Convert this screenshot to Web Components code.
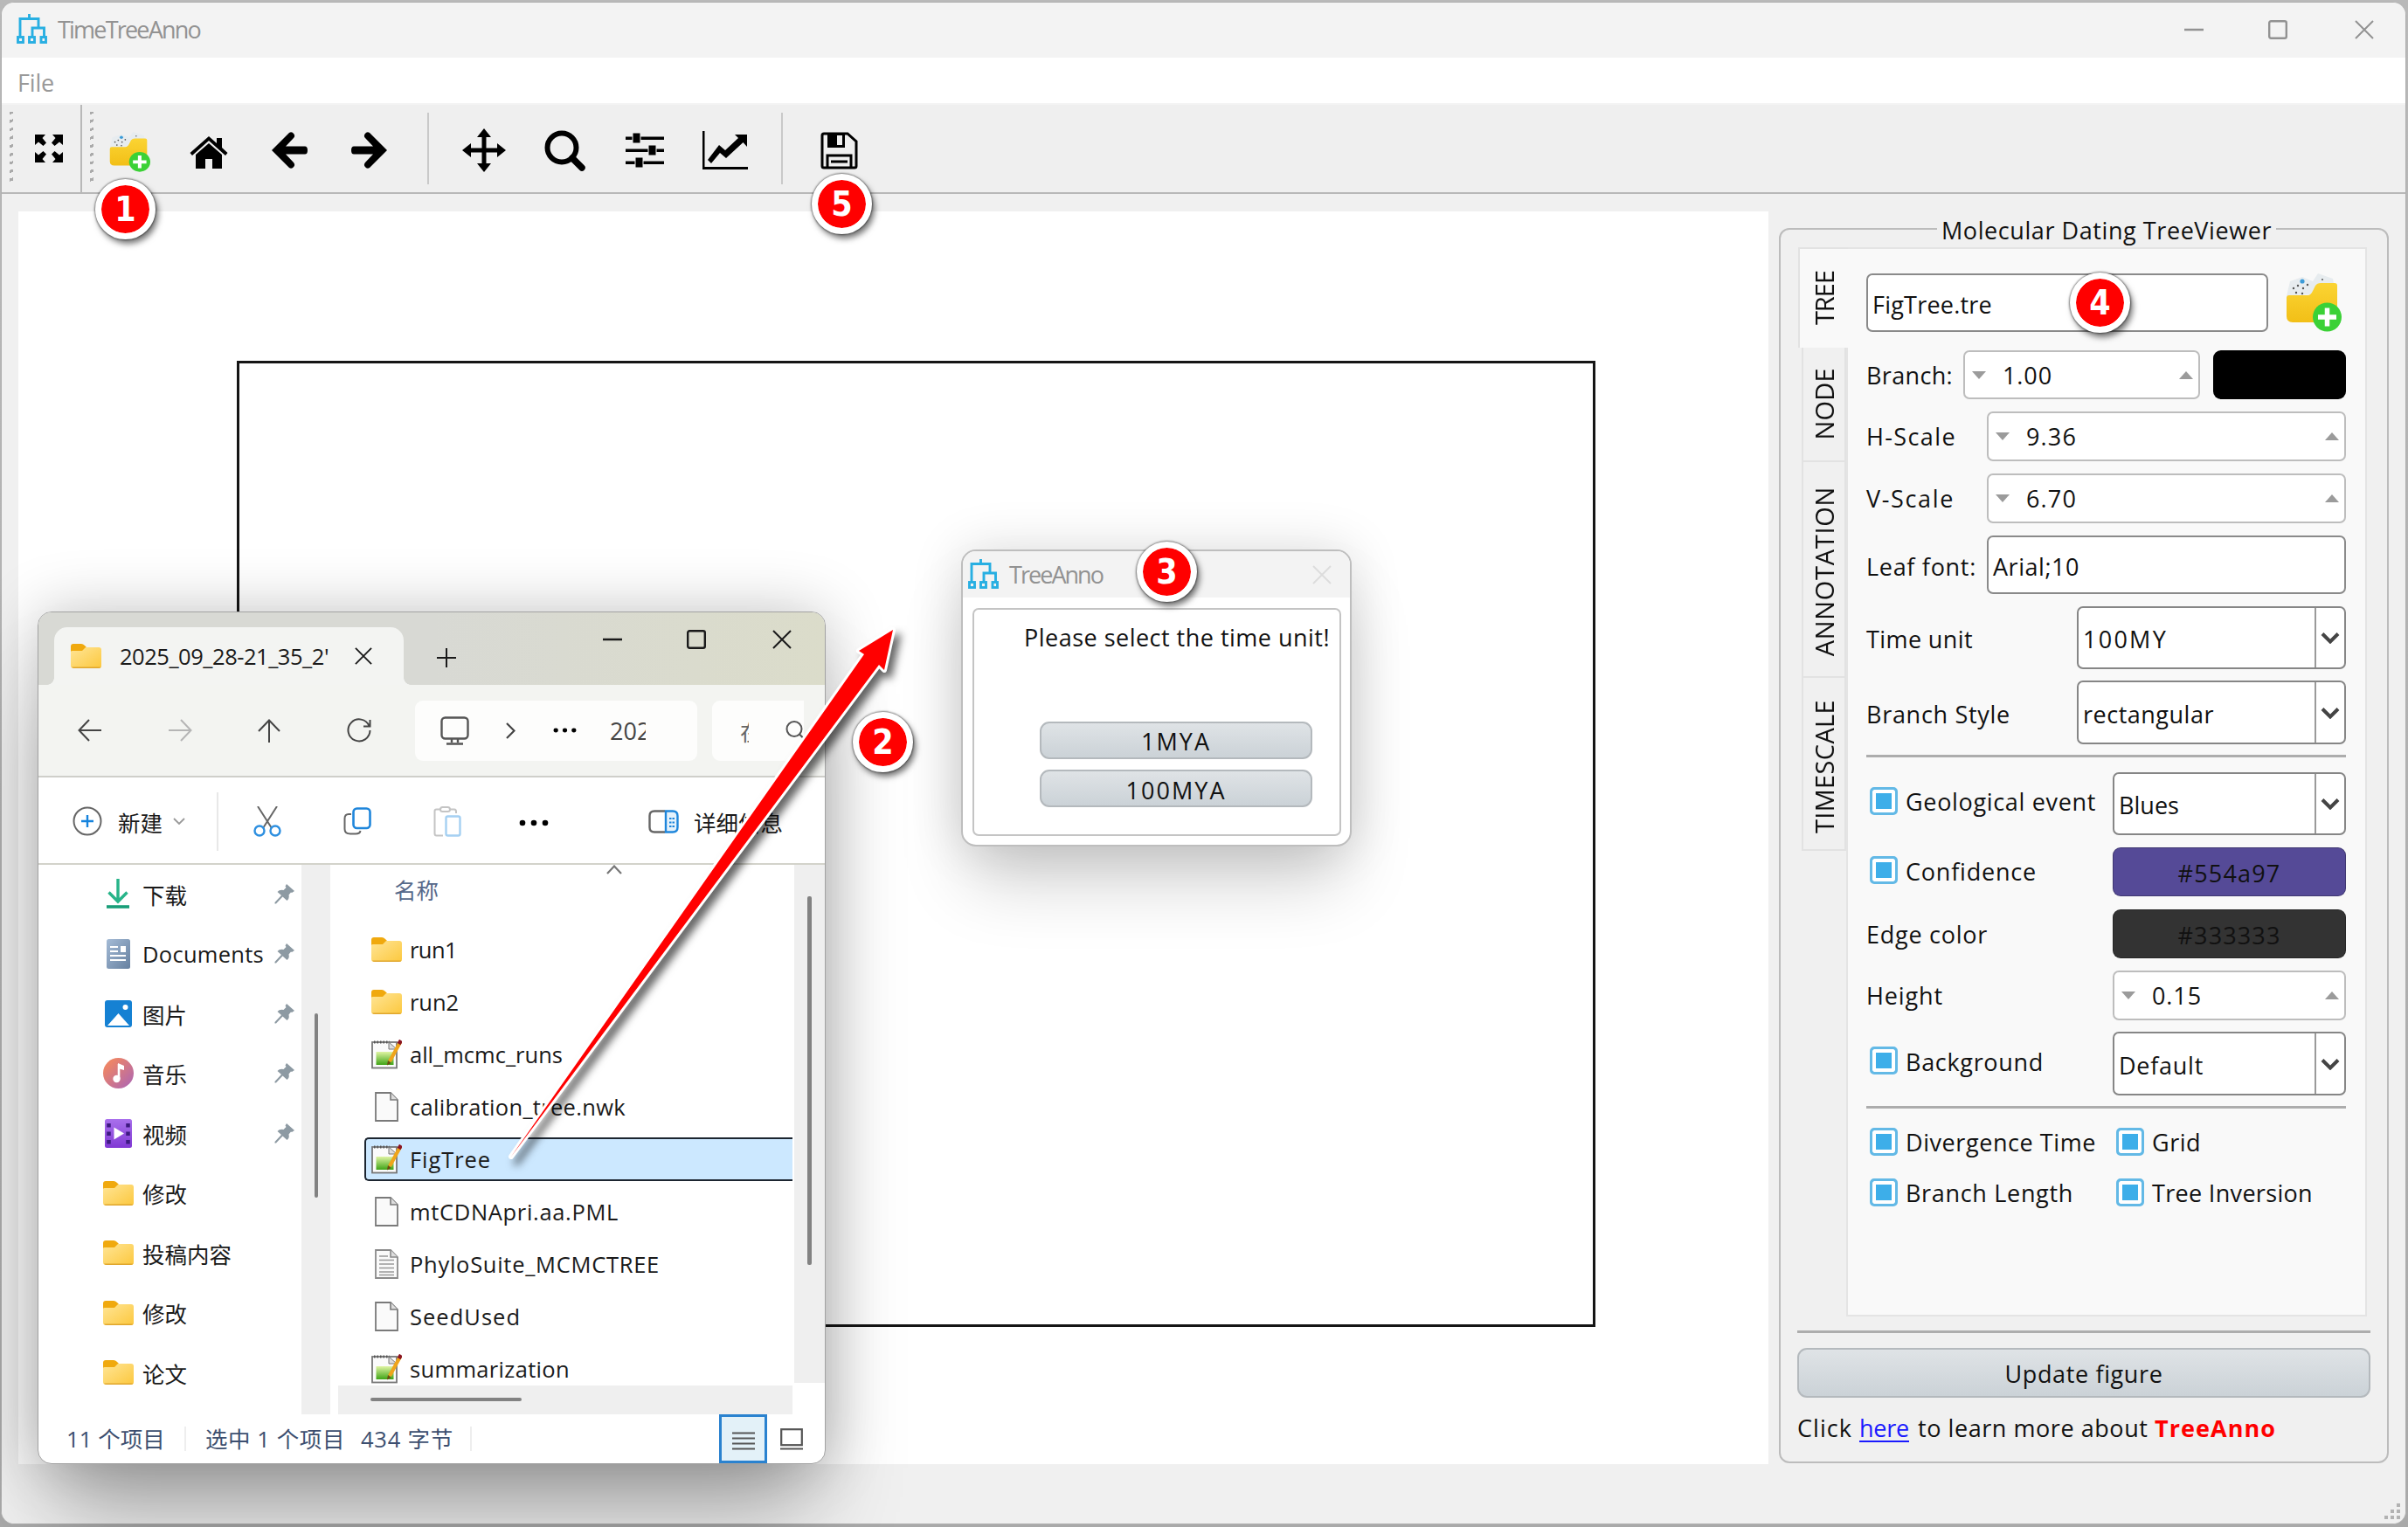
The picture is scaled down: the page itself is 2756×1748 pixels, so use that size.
<!DOCTYPE html>
<html lang="zh-CN">
<head>
<meta charset="utf-8">
<title>TimeTreeAnno</title>
<style>
  html, body {
    margin: 0;
    width: 2756px;
    height: 1748px;
    overflow: hidden;
  }
  body {
    position: relative;
    background: linear-gradient(#b9b9b9, #a9a9a9);
    font-family: "Open Sans", "Noto Sans CJK SC", sans-serif;
    font-size: 27px;
    color: #111;
  }
  tta-explorer, tta-dialog, tta-badge, tta-arrow {
    position: absolute;
  }
</style>
</head>
<body>
<tta-window></tta-window>
<tta-dialog style="left:1100px;top:629px"></tta-dialog>
<tta-explorer style="left:43px;top:700px"></tta-explorer>
<tta-arrow style="left:560px;top:700px"></tta-arrow>
<tta-badge style="left:109px;top:205px">1</tta-badge>
<tta-badge style="left:976px;top:815px">2</tta-badge>
<tta-badge style="left:1301px;top:620px">3</tta-badge>
<tta-badge style="left:2369px;top:312px">4</tta-badge>
<tta-badge style="left:929px;top:199px">5</tta-badge>

<script>
/**
 * Base element: renders markup() and styles() into an open shadow root
 */
class TtaElement extends HTMLElement {
  constructor() {
    super()
    this.attachShadow({ mode: 'open' })
  }

  connectedCallback() {
    this.shadowRoot.innerHTML = `<style>* { box-sizing: border-box; } ${this.styles()}</style>${this.markup()}`
  }

  attr(name, fallback = '') {
    return this.getAttribute(name) || fallback
  }
  styles() {
    return ':host { display: block; }'
  }
  markup() {
    return '<slot></slot>'
  }
}

const FOLDER = `
  <path d="M0 3Q0 0 3 0H12Q14 0 16 2L18 4V12H0Z" fill="#f0a90e"/>
  <path d="M0 9Q0 8 2 8H13L17 4H32Q35 4 35 7V25Q35 28 32 28H3Q0 28 0 25Z" fill="url(#g)"/>
  <path d="M1 26.500Q2 28 4 28H31Q34 28 34.500 26.500Z" fill="#e0a62c"/>
  <defs><linearGradient id="g" x1="0" y1="0" x2="1" y2="1"><stop offset="0" stop-color="#ffe596"/><stop offset="1" stop-color="#fcc83e"/></linearGradient></defs>`

// name: [viewBox width, viewBox height, markup]
const ICONS = {
  logo: [35, 35, `<g fill="none" stroke="#28afe2" stroke-width="2.900"><path d="M14.500 0V5M4 26V5.500H25V15M18 26V16H31.500V26"/><rect x="1.500" y="26.500" width="6" height="6"/><rect x="14.500" y="26.500" width="6" height="6"/><rect x="28" y="26.500" width="5.500" height="6"/></g>`],
  expand: [34, 34, `<path d="M1 1H13L9.500 5L14 10.500L10.500 14L5 9.500L1 13ZM33 1V13L29 9.500L23.500 14L20 10.500L24.500 5L21 1ZM1 33V21L5 24.500L10.500 20L14 23.500L9.500 29L13 33ZM33 33H21L24.500 29L20 23.500L23.500 20L29 24.500L33 21Z"/>`],
  folderadd: [64, 67, `
    <path d="M1 26L5 9L19 4L31 9L37 0L54 6L57 22Z" fill="#e7ecef"/>
    <g fill="#555"><circle cx="9" cy="17" r="1.200"/><circle cx="14" cy="14" r="1.200"/><circle cx="20" cy="17" r="1.200"/><circle cx="12" cy="22" r="1.200"/><circle cx="19" cy="23" r="1.200"/><circle cx="25" cy="13" r="1.200"/><circle cx="42" cy="7" r="1"/></g>
    <circle cx="19" cy="9" r="2.600" fill="#3b9bd8"/>
    <path d="M1 28Q1 25 4 25H25Q29 25 31 20L34 14Q36 11 40 11H56Q59 11 59 14V50Q59 56 53 56H8Q1 56 1 49Z" fill="url(#g)"/>
    <circle cx="47.500" cy="50" r="16.500" fill="#3bd136"/>
    <path d="M47.500 39.500V60.500M37 50H58" stroke="#fff" stroke-width="5.500"/>
    <defs><linearGradient id="g" x2="0" y2="1"><stop offset="0" stop-color="#fbd433"/><stop offset="1" stop-color="#f2bf17"/></linearGradient></defs>`],
  home: [44, 38, `<path d="M22 0L31 8V2H37V13L43.500 19L41 22L22 5L3 22L.5 19Z"/><path d="M22 8L37 21V37H26V26H18V37H7V21Z"/>`],
  back: [42, 44, `<path d="M20 2Q23 0 25.500 3.500Q27 6 25 8L16 17.500H38Q41 17.500 41 22Q41 26.500 38 26.500H16L25 36Q27 38.500 25.500 40.500Q23 44 20 42L0 22Z"/>`],
  forward: [42, 44, `<path d="M22 2Q19 0 16.500 3.500Q15 6 17 8L26 17.500H4Q1 17.500 1 22Q1 26.500 4 26.500H26L17 36Q15 38.500 16.500 40.500Q19 44 22 42L42 22Z"/>`],
  move: [50, 50, `<path d="M25 0L33 10H27.500V22.500H40V17L50 25L40 33V27.500H27.500V40H33L25 50L17 40H22.500V27.500H10V33L0 25L10 17V22.500H22.500V10H17Z"/>`],
  zoom: [48, 47, `<g fill="none" stroke="#000"><circle cx="20" cy="20" r="16.500" stroke-width="6"/><path d="M32 32L43 43" stroke-width="7.500" stroke-linecap="round"/></g>`],
  sliders: [44, 40, `<path d="M0 4.500H44V8H0ZM0 18.500H44V22H0ZM0 32.500H44V36H0Z"/><path d="M8 0H17V12H8ZM26 14H35V26H26ZM11 28H20V40H11Z" stroke="#efefef" stroke-width="1"/>`],
  chart: [52, 44, `<path d="M0 0H2.500V41H52V44H0Z"/><path d="M6 33L19 16L26 22L41 8L37 4H51V18L46.500 13L27 31L20 25L10 37Z"/>`],
  save: [43, 43, `<path d="M2 4Q2 2 4 2H31L41 11V39Q41 41 39 41H4Q2 41 2 39Z" fill="none" stroke="#000" stroke-width="3"/><path d="M8 2H28V18H8Z"/><path d="M19 4H25V15H19Z" fill="#efefef"/><path d="M8 41V27H35V41M12 34H31" fill="none" stroke="#000" stroke-width="3"/>`],
  min: [22, 22, `<path d="M0 11H22" stroke="currentColor" stroke-width="2.400"/>`],
  max: [22, 22, `<rect x="1.200" y="1.200" width="19.600" height="19.600" rx="2" fill="none" stroke="currentColor" stroke-width="2.400"/>`],
  close: [22, 22, `<path d="M1 1L21 21M21 1L1 21" stroke="currentColor" stroke-width="2"/>`],
  plus: [22, 22, `<path d="M11 0V22M0 11H22" stroke="currentColor" stroke-width="2"/>`],
  folder: [35, 28, FOLDER],
  navback: [28, 26, `<path d="M27 13H2M13 1L1.500 13L13 25" fill="none" stroke="currentColor" stroke-width="2"/>`],
  navforward: [28, 26, `<path d="M1 13H26M15 1L26.500 13L15 25" fill="none" stroke="currentColor" stroke-width="2"/>`],
  navup: [26, 27, `<path d="M13 27V2M1 14L13 1.500L25 14" fill="none" stroke="currentColor" stroke-width="2"/>`],
  refresh: [28, 28, `<path d="M25.500 9A12.500 12.500 0 1 0 26.500 14M26.500 2V9.500H19" fill="none" stroke="currentColor" stroke-width="2"/>`],
  monitor: [33, 33, `<g fill="none" stroke="#555" stroke-width="2.400"><rect x="1.500" y="1.500" width="30" height="24" rx="4"/><path d="M13 26V30M20 26V30M7 31.500H26"/></g>`],
  right: [11, 19, `<path d="M1 1L9.500 9.500L1 18" fill="none" stroke="#444" stroke-width="2.200"/>`],
  down: [14, 8, `<path d="M1 1L7 7L13 1" fill="none" stroke="#999" stroke-width="1.800"/>`],
  up: [18, 11, `<path d="M1 10L9 1.500L17 10" fill="none" stroke="#777" stroke-width="2.200"/>`],
  dots: [34, 8, `<circle cx="4" cy="4" r="3.300"/><circle cx="17" cy="4" r="3.300"/><circle cx="30" cy="4" r="3.300"/>`],
  search: [21, 22, `<g fill="none" stroke="#555" stroke-width="2"><circle cx="10" cy="9.500" r="8.500"/><path d="M16 15.500L22 21.500"/></g>`],
  newitem: [34, 34, `<circle cx="17" cy="17" r="15.500" fill="none" stroke="#666" stroke-width="2"/><path d="M17 10V24M10 17H24" stroke="#1583dd" stroke-width="2.400"/>`],
  cut: [32, 35, `<path d="M5 0L21 25M27 0L11 25" stroke="#666" stroke-width="2"/><g fill="#fff" stroke="#2d8fe0" stroke-width="2.400"><circle cx="7" cy="28" r="5.500"/><circle cx="25" cy="28" r="5.500"/></g>`],
  copy: [32, 32, `<path d="M9 8H6Q1.500 8 1.500 13V25Q1.500 30.500 8 30.500H14Q19 30.500 19.500 27" fill="none" stroke="#666" stroke-width="2"/><rect x="11.500" y="1.500" width="19" height="22.500" rx="4" fill="#fff" stroke="#1f86db" stroke-width="2.600"/>`],
  paste: [32, 35, `<g fill="none"><path d="M11 33.500H3.500Q1.500 33.500 1.500 31V5.500Q1.500 3.500 3.500 3.500H8M19 3.500H24Q26 3.500 26 6V8" stroke="#c4c4c4" stroke-width="2"/><rect x="8" y="1" width="11" height="5" rx="2.500" stroke="#c4c4c4" stroke-width="2"/><rect x="14.500" y="11.500" width="16" height="22" rx="2" stroke="#a5d0f2" stroke-width="2.400"/></g>`],
  details: [35, 27, `<path d="M19 1.500H7Q1.500 1.500 1.500 7V20Q1.500 25.500 7 25.500H19" fill="none" stroke="#666" stroke-width="2.400"/><path d="M20 1.500H28Q33.500 1.500 33.500 7V20Q33.500 25.500 28 25.500H20Z" fill="#e5f2fc" stroke="#1f86db" stroke-width="2.400"/><path d="M24 10H30M24 14.500H30M24 19H30" stroke="#1f86db" stroke-width="2" stroke-dasharray="2.500 1"/>`],
  download: [26, 34, `<path d="M13 0V25M2.500 15.500L13 26L23.500 15.500" fill="none" stroke="#27b489" stroke-width="3.400"/><path d="M0 32H26" stroke="#189e78" stroke-width="3.600"/>`],
  documents: [27, 34, `<rect width="27" height="34" rx="2.500" fill="url(#g)"/><path d="M4 9H13M4 14H13M4 19H22M4 24H22" stroke="#fff" stroke-width="2"/><rect x="16" y="8" width="6" height="7" fill="#fff"/><defs><linearGradient id="g" x2="1" y2="1"><stop offset="0" stop-color="#a4bbd6"/><stop offset="1" stop-color="#66809f"/></linearGradient></defs>`],
  pictures: [31, 31, `<rect width="31" height="31" rx="3" fill="#1581d3"/><path d="M3 29L15.500 15L28 29Z" fill="#fff"/><circle cx="23.500" cy="8" r="3" fill="#fff"/>`],
  music: [35, 35, `<circle cx="17.500" cy="17.500" r="17.500" fill="url(#g)"/><path d="M18 7V24" stroke="#fff" stroke-width="2.600"/><path d="M17 6L24 9V14L17 12Z" fill="#fff"/><circle cx="15.500" cy="24" r="4.200" fill="#fff"/><defs><linearGradient id="g" x2="1" y2="1"><stop offset=".2" stop-color="#ec8468"/><stop offset="1" stop-color="#a964b8"/></linearGradient></defs>`],
  video: [31, 33, `<rect width="31" height="33" rx="2.500" fill="url(#g)"/><path d="M10.500 9.500L22 16.500L10.500 23.500Z" fill="#fff"/><path d="M4.500 5V29M26.500 5V29" stroke="#3d1a80" stroke-width="4.500" stroke-dasharray="4.500 5"/><defs><linearGradient id="g" x2="0" y2="1"><stop offset="0" stop-color="#a970ec"/><stop offset="1" stop-color="#8038d4"/></linearGradient></defs>`],
  pin: [23, 23, `<path d="M14 0L23 8L20 10L19 9.500L16.500 12.500Q17.500 17 14.500 19L9.500 14.500L2 22.500L.5 22.500V21L8 13L3.500 9Q6 6 10.500 7L13.500 4L12.500 2.500Z" fill="#8d9aa3"/>`],
  notepad: [35, 34, `<rect x="1" y="3" width="28" height="29.500" fill="#fbfbfb" stroke="#777" stroke-width="1.800"/><path d="M3 3H21" stroke="#555" stroke-width="3" stroke-dasharray="1.500 2"/><path d="M20 3L29 11H20Z" fill="#ddd" stroke="#777"/><rect x="5.500" y="14" width="20" height="15" fill="url(#g)"/><path d="M33 3L21 25" stroke="#efa51b" stroke-width="4.200"/><path d="M22.500 27L18 29.500L19 24Z" fill="#6d4a10"/><path d="M34 1L31.500 5" stroke="#8b1622" stroke-width="4.500"/><defs><linearGradient id="g" x2="0" y2="1"><stop offset="0" stop-color="#dff4a2"/><stop offset="1" stop-color="#3fa416"/></linearGradient></defs>`],
  blank: [27, 34, `<path d="M1 1H18L26 9V33H1Z" fill="#fafafa" stroke="#7a7a7a" stroke-width="1.800"/><path d="M18 1V9H26" fill="#ddd" stroke="#7a7a7a" stroke-width="1.600"/>`],
  textfile: [27, 34, `<path d="M1 1H18L26 9V33H1Z" fill="#fafafa" stroke="#8a8a8a" stroke-width="1.800"/><path d="M18 1V9H26" fill="#ddd" stroke="#8a8a8a" stroke-width="1.600"/><path d="M5 8H15M5 12.500H22M5 17H22M5 21.500H22M5 26H22M5 29.500H22" stroke="#999" stroke-width="1.600"/>`],
  lines: [26, 21, `<path d="M0 1.500H26M0 7.500H26M0 13.500H26M0 19.500H26" stroke="#555" stroke-width="2"/>`],
  tiles: [26, 25, `<rect x="1.200" y="1.200" width="23.600" height="18" fill="none" stroke="#555" stroke-width="2.200"/><path d="M0 23.500H26" stroke="#555" stroke-width="2"/>`],
  chevron: [22, 14, `<path d="M2 2.500L11 11.500L20 2.500" fill="none" stroke="#444" stroke-width="4"/>`],
  tridown: [16, 9, `<path d="M0 0H16L8 9Z" fill="#9b9b9b"/>`],
  triup: [16, 9, `<path d="M0 9H16L8 0Z" fill="#9b9b9b"/>`]
}

class TtaIcon extends TtaElement {
  styles() {
    return `
      :host { display: inline-block; flex: none; }
      svg { display: block; }
    `
  }
  markup() {
    const [w, h, body] = ICONS[this.attr('name')]
    const width = Number(this.attr('w', w))
    const height = Number(this.attr('h', (width * h) / w))
    return `<svg width="${width}" height="${height}" viewBox="0 0 ${w} ${h}" preserveAspectRatio="none">${body}</svg>`
  }
}

/**
 * Text run that tracks its letters to span the width in "w"
 */
class TtaLabel extends TtaElement {
  connectedCallback() {
    super.connectedCallback()
    const target = Number(this.attr('w', 0))
    if (!target) return
    const vertical = getComputedStyle(this).writingMode !== 'horizontal-tb'
    const natural = vertical ? this.offsetHeight : this.getBoundingClientRect().width
    this.style.letterSpacing = `${(target - natural) / this.textContent.length}px`
  }
  styles() {
    return ':host { display: inline-block; flex: none; white-space: pre; }'
  }
}

/* ---------- main window ---------- */

class TtaTitlebar extends TtaElement {
  styles() {
    return `
      :host { display: flex; align-items: center; height: 63px; background: #f3f3f3; color: #929292; padding: 0 36px 2px 17px; }
      tta-label { margin-left: 12px; margin-right: auto; }
      .max { margin: 0 77px 0 74px; }
    `
  }
  markup() {
    return `
      <tta-icon name="logo"></tta-icon>
      <tta-label w="163">TimeTreeAnno</tta-label>
      <tta-icon name="min"></tta-icon>
      <tta-icon class="max" name="max"></tta-icon>
      <tta-icon name="close"></tta-icon>
    `
  }
}

class TtaMenubar extends TtaElement {
  styles() {
    return `
      :host { display: flex; align-items: center; height: 54px; padding: 4px 18px 0; background: #fff; border-bottom: 2px solid #f4f4f4; color: #999; }
    `
  }
  markup() {
    return '<tta-label w="42">File</tta-label>'
  }
}

class TtaToolbar extends TtaElement {
  styles() {
    return `
      :host { display: flex; align-items: center; height: 102px; background: #efefef; border-bottom: 2px solid #b8b8b8; }
      .grip { width: 4px; height: 84px; background: repeating-linear-gradient(160deg, #aaa 0 3px, #efefef 3px 9px); }
      .sep { width: 2px; height: 82px; background: #c9c9c9; }
      .full { height: 100px; background: #b8b8b8; }
    `
  }
  markup() {
    const items = [
      ['move', 38], ['zoom', 44], ['sliders', 45], ['chart', 44]
    ]
    return `
      <span class="grip" style="margin-left:9px"></span>
      <tta-icon name="expand" style="margin-left:24px"></tta-icon>
      <span class="sep full" style="margin-left:19px"></span>
      <span class="grip" style="margin-left:9px"></span>
      <tta-icon name="folderadd" w="47" h="46" style="margin:8px 0 0 18px"></tta-icon>
      <tta-icon name="home" style="margin:10px 0 0 45px"></tta-icon>
      <tta-icon name="back" style="margin:4px 0 0 50px"></tta-icon>
      <tta-icon name="forward" style="margin:4px 0 0 48px"></tta-icon>
      <span class="sep" style="margin-left:46px"></span>
      ${items.map(([name, gap]) => `<tta-icon name="${name}" style="margin:4px 0 0 ${gap}px"></tta-icon>`).join('')}
      <span class="sep" style="margin-left:38px"></span>
      <tta-icon name="save" style="margin:4px 0 0 43px"></tta-icon>
    `
  }
}

class TtaCanvas extends TtaElement {
  styles() {
    return `
      :host { display: block; flex: none; width: 2003px; height: 1434px; padding: 171px 0 0 250px; background: #fff; }
      .plot { width: 1555px; height: 1106px; border: 3px solid #151515; }
    `
  }
  markup() {
    return '<div class="plot"></div>'
  }
}

/* ---------- form controls ---------- */

class TtaRow extends TtaElement {
  styles() {
    return `
      :host { display: flex; align-items: center; justify-content: space-between; height: ${this.attr('h')}px; margin-top: ${this.attr('gap', 0)}px; }
    `
  }
}

class TtaInput extends TtaElement {
  styles() {
    return `
      :host { display: flex; align-items: center; flex: none; box-sizing: border-box; width: ${this.attr('width')}px; height: 100%; padding: 4px 0 0 5px; background: #fff; border: 2px solid #8a8a8a; border-radius: 7px; }
    `
  }
}

class TtaSpin extends TtaElement {
  styles() {
    return `
      :host { display: flex; align-items: center; flex: none; width: ${this.attr('width')}px; height: 100%; padding: 0 6px 0 8px; background: #fff; border: 2px solid #bdbdbd; border-radius: 7px; }
      slot { display: block; flex: 1; padding-left: 19px; }
    `
  }
  markup() {
    return '<tta-icon name="tridown"></tta-icon><slot></slot><tta-icon name="triup"></tta-icon>'
  }
}

class TtaCombo extends TtaElement {
  styles() {
    return `
      :host { display: flex; flex: none; width: ${this.attr('width')}px; height: 100%; background: #fff; border: 2px solid #868686; border-radius: 7px; }
      .value { display: flex; align-items: center; flex: 1; padding: 3px 0 0 5px; }
      .arrow { display: flex; align-items: center; justify-content: center; width: 34px; border-left: 2px solid #9a9a9a; }
    `
  }
  markup() {
    return '<div class="value"><slot></slot></div><div class="arrow"><tta-icon name="chevron"></tta-icon></div>'
  }
}

class TtaCheck extends TtaElement {
  styles() {
    return `
      :host { display: flex; align-items: center; gap: 9px; padding-left: 4px; }
      .box { width: 32px; height: 32px; border: 3px solid #63b9e6; border-radius: 5px; background: #3daee9; box-shadow: inset 0 0 0 4px #fff; }
      ::slotted(tta-label) { margin-top: 2px; }
    `
  }
  markup() {
    return '<span class="box"></span><slot></slot>'
  }
}

class TtaButton extends TtaElement {
  styles() {
    return `
      :host { display: flex; align-items: center; justify-content: center; flex: none; background: linear-gradient(#dfe3e6, #cbd2d7); border: 2px solid #b4b9bd; border-radius: 11px; }
    `
  }
}

class TtaSwatch extends TtaElement {
  styles() {
    return `
      :host { display: flex; align-items: center; justify-content: center; flex: none; width: ${this.attr('width')}px; height: 100%; padding-top: 2px; background: ${this.attr('color')}; border: 1px solid rgba(0, 0, 0, .25); border-radius: 9px; }
    `
  }
}

class TtaPanel extends TtaElement {
  styles() {
    return `
      :host { display: block; flex: none; width: 698px; height: 1432px; margin: 1px 0 0 12px; }
      fieldset { height: 100%; margin: 0; padding: 2px 19px 0; border: 2px solid #bcbcbc; border-radius: 12px; }
      legend { height: 38px; line-height: 42px; margin: 0 0 0 160px; padding: 0 5px; }
      .tabs { display: flex; height: 1224px; }
      .bar { width: 58px; margin-right: -2px; z-index: 1; }
      .tab { display: flex; align-items: center; justify-content: center; margin-left: 5px; width: 51px; writing-mode: vertical-rl; font-size: 29px; background: #f0f0f0; border: 2px solid #e2e2e2; border-top: 0; }
      .tab tta-label { transform: rotate(180deg); }
      .tab.on { margin-left: 1px; width: 57px; background: #f9f9f9; border: 2px solid #e2e2e2; border-width: 2px 0 0 2px; }
      .pane { width: 596px; padding: 28px 22px 0 21px; background: #f9f9f9; border: 2px solid #e4e4e4; }
      hr { height: 3px; margin: 0; border: 0; background: #adadad; }
      .start { justify-content: flex-start; }
      .start tta-check { flex: none; }
      .start tta-check:first-child { box-sizing: border-box; width: 282px; }
      tta-row.low > tta-label { margin-top: 3px; }
      .foot { display: flex; flex-direction: column; }
      .foot tta-button { height: 57px; margin-top: 17px; padding-top: 2px; }
      .link { display: flex; align-items: center; height: 40px; margin-top: 14px; }
      .link a { color: #1a1aff; margin: 0 10px 0 0; }
      .link a tta-label { text-decoration: underline 2px; text-underline-offset: 4px; }
      .link b { color: #f00; }
    `
  }
  markup() {
    const check = (w, text, style = '') => `<tta-check style="${style}"><tta-label w="${w}">${text}</tta-label></tta-check>`
    return `
      <fieldset>
        <legend><tta-label w="378">Molecular Dating TreeViewer</tta-label></legend>
        <div class="tabs">
          <div class="bar">
            <div class="tab on" style="height:115px"><tta-label w="62">TREE</tta-label></div>
            <div class="tab" style="height:131px"><tta-label w="83">NODE</tta-label></div>
            <div class="tab" style="height:247px;padding-top:5px"><tta-label w="194">ANNOTATION</tta-label></div>
            <div class="tab" style="height:198px;padding-top:7px"><tta-label w="153">TIMESCALE</tta-label></div>
          </div>
          <div class="pane">
            <tta-row h="67">
              <tta-input width="460"><tta-label w="137">FigTree.tre</tta-label></tta-input>
              <tta-icon name="folderadd" style="margin-right:5px"></tta-icon>
            </tta-row>
            <tta-row h="56" gap="21">
              <tta-label w="99">Branch:</tta-label>
              <tta-spin width="271" style="margin:0 auto 0 12px"><tta-label w="57">1.00</tta-label></tta-spin>
              <tta-swatch color="#000" width="152"></tta-swatch>
            </tta-row>
            <tta-row h="57" gap="14"><tta-label w="103">H-Scale</tta-label><tta-spin width="411"><tta-label w="58">9.36</tta-label></tta-spin></tta-row>
            <tta-row h="57" gap="14"><tta-label w="101">V-Scale</tta-label><tta-spin width="411"><tta-label w="58">6.70</tta-label></tta-spin></tta-row>
            <tta-row h="67" gap="14" class="low"><tta-label w="126">Leaf font:</tta-label><tta-input width="411"><tta-label w="99">Arial;10</tta-label></tta-input></tta-row>
            <tta-row h="72" gap="14" class="low"><tta-label w="122">Time unit</tta-label><tta-combo width="308"><tta-label w="97">100MY</tta-label></tta-combo></tta-row>
            <tta-row h="73" gap="13" class="low"><tta-label w="165">Branch Style</tta-label><tta-combo width="308"><tta-label w="150">rectangular</tta-label></tta-combo></tta-row>
            <hr style="margin-top:12px">
            <tta-row h="72" gap="17">${check(218, 'Geological event', 'margin-top:-7px')}<tta-combo width="267"><tta-label w="69">Blues</tta-label></tta-combo></tta-row>
            <tta-row h="56" gap="14">${check(150, 'Confidence', 'margin-top:-4px')}<tta-swatch color="#554a97" width="267"><tta-label w="118">#554a97</tta-label></tta-swatch></tta-row>
            <tta-row h="56" gap="15"><tta-label w="139">Edge color</tta-label><tta-swatch color="#333333" width="267"><tta-label w="118">#333333</tta-label></tta-swatch></tta-row>
            <tta-row h="57" gap="14"><tta-label w="88">Height</tta-label><tta-spin width="267"><tta-label w="57">0.15</tta-label></tta-spin></tta-row>
            <tta-row h="73" gap="13">${check(158, 'Background', 'margin-top:-7px')}<tta-combo width="267"><tta-label w="97">Default</tta-label></tta-combo></tta-row>
            <hr style="margin-top:12px">
            <tta-row h="33" gap="21" class="start">${check(218, 'Divergence Time')}${check(56, 'Grid')}</tta-row>
            <tta-row h="33" gap="25" class="start">${check(192, 'Branch Length')}${check(184, 'Tree Inversion')}</tta-row>
          </div>
        </div>
        <div class="foot">
          <hr style="margin-top:16px">
          <tta-button><tta-label w="181">Update figure</tta-label></tta-button>
          <div class="link">
            <tta-label w="71">Click </tta-label><a><tta-label w="57">here</tta-label></a><tta-label w="271">to learn more about </tta-label><b><tta-label w="139">TreeAnno</tta-label></b>
          </div>
        </div>
      </fieldset>
    `
  }
}

class TtaWindow extends TtaElement {
  styles() {
    return `
      :host { display: flex; flex-direction: column; box-sizing: border-box; width: 2753px; height: 1743px; margin: 2px 0 0 1px; background: #efefef; border: 1px solid #b0b0b0; border-radius: 15px; overflow: hidden; position: absolute; }
      main { display: flex; flex: 1; padding: 20px 0 0 19px; background: #f0f0f0; }
      .grip { flex: none; align-self: flex-end; margin: 0 0 5px -5px; }
    `
  }
  markup() {
    return `
      <tta-titlebar></tta-titlebar>
      <tta-menubar></tta-menubar>
      <tta-toolbar></tta-toolbar>
      <main>
        <tta-canvas></tta-canvas>
        <tta-panel></tta-panel>
        <svg class="grip" width="18" height="18" fill="#b2b2b2"><path d="M14 0h4v4h-4zM7 7h4v4h-4zM14 7h4v4h-4zM0 14h4v4h-4zM7 14h4v4h-4zM14 14h4v4h-4z"/></svg>
      </main>
    `
  }
}

/* ---------- time unit dialog ---------- */

class TtaDialog extends TtaElement {
  styles() {
    return `
      :host { box-sizing: border-box; width: 447px; height: 340px; background: #fff; border: 2px solid #bebebe; border-radius: 17px; box-shadow: 0 50px 80px -10px rgba(0, 0, 0, .18), 0 0 60px rgba(0, 0, 0, .14); overflow: hidden; }
      header { display: flex; align-items: center; height: 53px; padding: 0 21px 0 6px; background: #f3f3f3; color: #929292; }
      header tta-label { margin: 0 auto 0 12px; }
      header .x { color: #dcdcdc; }
      .box { display: flex; flex-direction: column; height: 261px; width: 422px; margin: 12px 0 0 11px; padding: 12px 11px 0 0; border: 2px solid #c4c4c4; border-radius: 7px; }
      .msg { align-self: flex-end; line-height: 40px; }
      tta-button { box-sizing: border-box; width: 312px; height: 43px; margin-left: 75px; }
      .cut { height: 32px; margin-top: -1px; overflow: hidden; line-height: 38px; }
    `
  }
  markup() {
    return `
      <header>
        <tta-icon name="logo"></tta-icon><tta-label w="107">TreeAnno</tta-label><tta-icon class="x" name="close"></tta-icon>
      </header>
      <div class="box">
        <tta-label class="msg" w="350">Please select the time unit!</tta-label>
        <tta-button style="margin-top:76px"><tta-label w="80" style="margin-top:1px">1MYA</tta-label></tta-button>
        <tta-button style="margin-top:12px"><div class="cut"><tta-label w="115">100MYA</tta-label></div></tta-button>
      </div>
    `
  }
}

/* ---------- file explorer ---------- */

class TtaPlace extends TtaElement {
  styles() {
    return `
      :host { display: flex; align-items: center; height: 68.5px; padding: 0 8px 0 73px; }
      .icon { display: flex; justify-content: center; width: 36px; margin-right: 10px; }
      .pin { margin-left: auto; }
    `
  }
  markup() {
    return `
      <span class="icon"><tta-icon name="${this.attr('icon', 'folder')}"></tta-icon></span>
      <slot></slot>
      ${this.hasAttribute('pinned') ? '<tta-icon class="pin" name="pin"></tta-icon>' : ''}
    `
  }
}

class TtaFile extends TtaElement {
  styles() {
    return `
      :host { display: block; height: 60px; padding: 5px 0 5px 30px; box-sizing: border-box; }
      .row { display: flex; align-items: center; height: 50px; padding-left: 6px; border: 2px solid transparent; border-right: 0; border-radius: 5px 0 0 5px; }
      :host([selected]) .row { background: #cce8ff; border-color: #1c2530; }
      .icon { display: flex; justify-content: center; width: 35px; margin-right: 9px; }
    `
  }
  markup() {
    return `
      <div class="row">
        <span class="icon"><tta-icon name="${this.attr('icon')}"></tta-icon></span>
        <slot></slot>
      </div>
    `
  }
}

class TtaExplorer extends TtaElement {
  styles() {
    return `
      :host { box-sizing: border-box; width: 902px; height: 976px; background: #fff; border: 1px solid #a2a2a2; border-radius: 16px; box-shadow: 0 75px 100px -20px rgba(0, 0, 0, .3), 0 0 70px rgba(0, 0, 0, .23); overflow: hidden; font-size: 25.5px; color: #1a1a1a; }
      .strip { display: flex; align-items: flex-end; height: 83px; background: linear-gradient(90deg, #d8d9d4 50%, #dbdcca); }
      .tab { position: relative; display: flex; align-items: center; width: 400px; height: 66px; margin-left: 18px; padding: 0 36px 0 19px; background: #f3f4f2; border-radius: 15px 15px 0 0; }
      .tab::before, .tab::after { content: ''; position: absolute; bottom: 0; left: -8px; width: 8px; height: 8px; background: radial-gradient(circle at 0 0, transparent 7.5px, #f3f4f2 8px); }
      .tab::after { left: 400px; background: radial-gradient(circle at 100% 0, transparent 7.5px, #f3f4f2 8px); }
      .tab tta-label { margin: 0 auto 0 21px; font-weight: 500; }
      .ctl { display: flex; align-items: center; align-self: flex-start; margin-left: 168px; height: 61px; }
      .nav { display: flex; align-items: center; height: 106px; padding-left: 45px; background: #f3f4f1; border-bottom: 2px solid #cfcfca; color: #444; }
      .addr { display: flex; align-items: center; width: 323px; height: 69px; margin-left: 50px; padding-left: 29px; background: #fdfdfc; border-radius: 9px; }
      .find { display: flex; align-items: center; width: 105px; height: 69px; margin-left: 17px; padding-left: 32px; background: #fdfdfc; border-radius: 9px 0 0 9px; color: #666; }
      .clip { overflow: hidden; white-space: nowrap; }
      .tools { display: flex; align-items: center; height: 100px; padding: 2px 0 0 39px; border-bottom: 2px solid #d3d3cb; }
      .vr { width: 2px; height: 67px; background: #e8e8e8; }
      .body { display: flex; height: 629px; }
      .places { width: 301px; margin-top: -1px; overflow: hidden; }
      .gutter { width: 33px; padding: 170px 0 0 15px; background: #efefef; }
      .thumb { width: 4px; background: #828282; border-radius: 2px; }
      .files { width: 520px; margin-left: 9px; }
      .list { height: 596px; overflow: hidden; }
      .head { display: flex; height: 67px; padding-left: 64px; color: #56698a; }
      .hbar { height: 33px; padding: 14px 0 0 37px; background: #efefef; }
      .vbar { width: 35px; height: 593px; margin-left: 2px; padding: 36px 0 0 15px; background: #efefef; }
      .status { display: flex; align-items: center; height: 56px; padding-left: 32px; color: #3d4f70; }
      .status tta-label { margin-top: -4px; }
      .status .vr { height: 28px; background: #eee; }
      .view { display: flex; align-items: center; justify-content: center; width: 55px; height: 56px; border: 3px solid #2a82cf; background: #e3f1f8; padding-top: 4px; }
    `
  }
  markup() {
    return `
      <div class="strip">
        <div class="tab">
          <tta-icon name="folder"></tta-icon>
          <tta-label w="239">2025_09_28-21_35_2'</tta-label>
          <tta-icon name="close" w="20"></tta-icon>
        </div>
        <tta-icon name="plus" style="margin:0 0 20px 38px"></tta-icon>
        <div class="ctl">
          <tta-icon name="min"></tta-icon>
          <tta-icon name="max" style="margin-left:74px"></tta-icon>
          <tta-icon name="close" style="margin-left:76px"></tta-icon>
        </div>
      </div>
      <div class="nav">
        <tta-icon name="navback"></tta-icon>
        <tta-icon name="navforward" style="margin-left:75px;color:#b5b5b5"></tta-icon>
        <tta-icon name="navup" style="margin-left:75px"></tta-icon>
        <tta-icon name="refresh" style="margin-left:76px"></tta-icon>
        <div class="addr">
          <tta-icon name="monitor"></tta-icon>
          <tta-icon name="right" style="margin-left:42px"></tta-icon>
          <tta-icon name="dots" w="27" h="6" style="margin-left:43px"></tta-icon>
          <span class="clip" style="width:41px;margin-left:38px;font-size:27px">202</span>
        </div>
        <div class="find">
          <span class="clip" style="width:10px">在</span>
          <tta-icon name="search" style="margin-left:42px"></tta-icon>
        </div>
      </div>
      <div class="tools">
        <tta-icon name="newitem"></tta-icon>
        <tta-label style="margin-left:18px">新建</tta-label>
        <tta-icon name="down" style="margin-left:12px"></tta-icon>
        <span class="vr" style="margin-left:36px"></span>
        <tta-icon name="cut" style="margin-left:40px"></tta-icon>
        <tta-icon name="copy" style="margin-left:71px"></tta-icon>
        <tta-icon name="paste" style="margin-left:71px"></tta-icon>
        <tta-icon name="dots" style="margin:4px 0 0 66px"></tta-icon>
        <tta-icon name="details" style="margin-left:114px"></tta-icon>
        <tta-label style="margin-left:17px">详细信息</tta-label>
      </div>
      <div class="body">
        <div class="places">
          <tta-place icon="download" pinned><tta-label>下载</tta-label></tta-place>
          <tta-place icon="documents" pinned><tta-label w="139">Documents</tta-label></tta-place>
          <tta-place icon="pictures" pinned><tta-label>图片</tta-label></tta-place>
          <tta-place icon="music" pinned><tta-label>音乐</tta-label></tta-place>
          <tta-place icon="video" pinned><tta-label>视频</tta-label></tta-place>
          <tta-place><tta-label>修改</tta-label></tta-place>
          <tta-place><tta-label>投稿内容</tta-label></tta-place>
          <tta-place><tta-label>修改</tta-label></tta-place>
          <tta-place><tta-label>论文</tta-label></tta-place>
        </div>
        <div class="gutter"><div class="thumb" style="height:211px"></div></div>
        <div class="files">
          <div class="list">
            <div class="head">
              <tta-label style="margin-top:9px">名称</tta-label>
              <tta-icon name="up" style="margin-left:192px"></tta-icon>
            </div>
            <tta-file icon="folder"><tta-label w="54">run1</tta-label></tta-file>
            <tta-file icon="folder"><tta-label w="56">run2</tta-label></tta-file>
            <tta-file icon="notepad"><tta-label w="175">all_mcmc_runs</tta-label></tta-file>
            <tta-file icon="blank"><tta-label w="247">calibration_tree.nwk</tta-label></tta-file>
            <tta-file icon="notepad" selected><tta-label w="93">FigTree</tta-label></tta-file>
            <tta-file icon="blank"><tta-label w="239">mtCDNApri.aa.PML</tta-label></tta-file>
            <tta-file icon="textfile"><tta-label w="286">PhyloSuite_MCMCTREE</tta-label></tta-file>
            <tta-file icon="blank"><tta-label w="127">SeedUsed</tta-label></tta-file>
            <tta-file icon="notepad"><tta-label w="183">summarization</tta-label></tta-file>
          </div>
          <div class="hbar"><div class="thumb" style="width:173px;height:4px"></div></div>
        </div>
        <div class="vbar"><div class="thumb" style="width:5px;height:422px"></div></div>
      </div>
      <div class="status">
        <tta-label w="113">11 个项目</tta-label>
        <span class="vr" style="margin-left:22px"></span>
        <tta-label w="160" style="margin-left:22px">选中 1 个项目</tta-label>
        <tta-label w="106" style="margin-left:18px">434 字节</tta-label>
        <span class="vr" style="margin-left:19px"></span>
        <span class="view" style="margin-left:283px"><tta-icon name="lines"></tta-icon></span>
        <tta-icon name="tiles" style="margin-left:15px"></tta-icon>
      </div>
    `
  }
}

/* ---------- step markers ---------- */

class TtaBadge extends TtaElement {
  styles() {
    return `
      :host { display: flex; align-items: center; justify-content: center; box-sizing: border-box; width: 69px; height: 69px; border: 7px solid #fff; border-radius: 50%; background: #f00; background-clip: padding-box; box-shadow: 0 0 2px 1px rgba(0, 0, 0, .45), 3px 5px 7px rgba(0, 0, 0, .55); color: #fff; font: bold 39px/55px "DejaVu Sans Condensed", "DejaVu Sans", sans-serif; }
    `
  }
}

class TtaArrow extends TtaElement {
  styles() {
    return `
      :host { display: block; pointer-events: none; }
      svg { display: block; overflow: visible; filter: drop-shadow(6px 7px 5px rgba(0, 0, 0, .6)); }
    `
  }
  markup() {
    return `
      <svg width="480" height="640">
        <path d="M25 624L429 49L423 45L462 21L452 67L446 61Z" fill="#f00" stroke="#fff" stroke-width="6" paint-order="stroke" stroke-linejoin="round"/>
      </svg>
    `
  }
}

customElements.define('tta-icon', TtaIcon)
customElements.define('tta-titlebar', TtaTitlebar)
customElements.define('tta-menubar', TtaMenubar)
customElements.define('tta-toolbar', TtaToolbar)
customElements.define('tta-canvas', TtaCanvas)
customElements.define('tta-row', TtaRow)
customElements.define('tta-input', TtaInput)
customElements.define('tta-spin', TtaSpin)
customElements.define('tta-combo', TtaCombo)
customElements.define('tta-check', TtaCheck)
customElements.define('tta-button', TtaButton)
customElements.define('tta-swatch', TtaSwatch)
customElements.define('tta-panel', TtaPanel)
customElements.define('tta-window', TtaWindow)
customElements.define('tta-dialog', TtaDialog)
customElements.define('tta-place', TtaPlace)
customElements.define('tta-file', TtaFile)
customElements.define('tta-explorer', TtaExplorer)
customElements.define('tta-badge', TtaBadge)
customElements.define('tta-arrow', TtaArrow)
// Labels measure themselves, so their containers have to be styled first
customElements.define('tta-label', TtaLabel)
</script>
</body>
</html>
